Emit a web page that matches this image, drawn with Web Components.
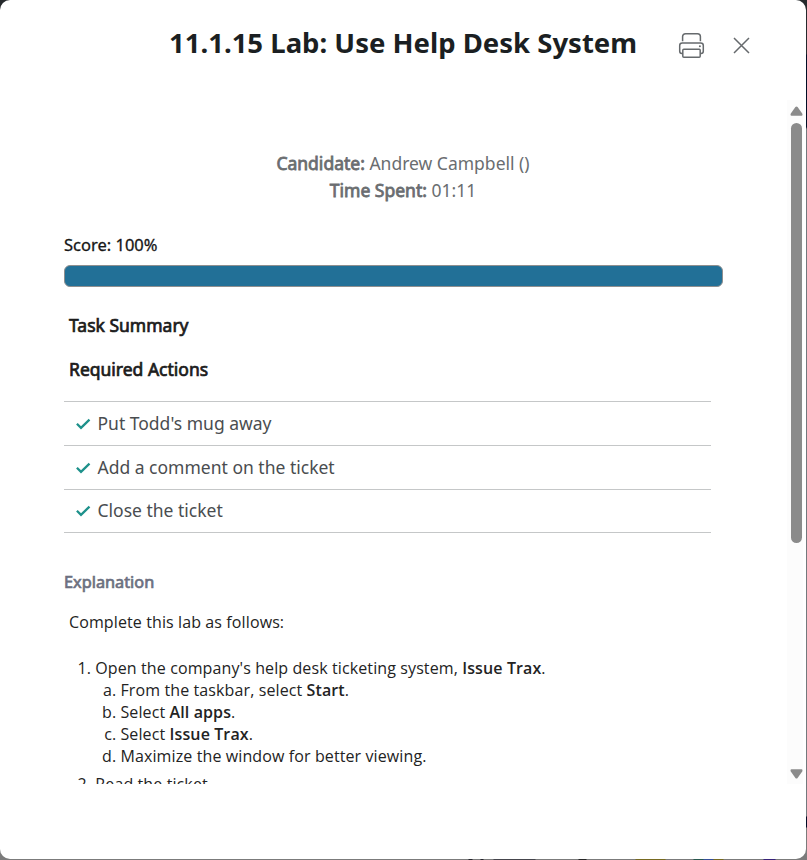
<!DOCTYPE html>
<html lang="en">
<head>
<meta charset="utf-8">
<title>11.1.15 Lab: Use Help Desk System</title>
<style>
html,body{margin:0;height:100%;overflow:hidden}
body{font-family:"Noto Sans","Open Sans",sans-serif;color:#1b1f22}
</style>
</head>
<body>
<report-dialog>
  <dialog-header slot="header">11.1.15 Lab: Use Help Desk System</dialog-header>
  <candidate-info>
    <info-line label="Candidate:">Andrew Campbell ()</info-line>
    <info-line label="Time Spent:">01:11</info-line>
  </candidate-info>
  <score-bar>Score: 100%</score-bar>
  <task-summary>
    <task-item>Put Todd's mug away</task-item>
    <task-item>Add a comment on the ticket</task-item>
    <task-item>Close the ticket</task-item>
  </task-summary>
  <lab-explanation></lab-explanation>
</report-dialog>
<script>
function define(name, html) {
  const t = document.createElement('template');
  t.innerHTML = html;
  customElements.define(name, class extends HTMLElement {
    constructor() {
      super();
      this.attachShadow({mode: 'open'}).append(t.content.cloneNode(true));
    }
    connectedCallback() {
      const l = this.shadowRoot.querySelector('[data-label]');
      if (l) l.textContent = this.getAttribute('label');
    }
  });
}

define('dialog-header', `
<style>
:host{display:flex;height:100px;box-sizing:border-box;padding:22px 56px 0 169px;align-items:flex-start}
h1{margin:0;font-size:27.5px;line-height:42px;font-weight:700;white-space:nowrap;width:509px;color:#1b1f22}
svg{display:block;flex:none;fill:none;stroke:#666a6d;stroke-width:1.5}
.print{margin:9px 0 0 0}
.close{margin:15px 0 0 27px}
</style>
<h1><slot></slot></h1>
<svg class="print" width="28" height="30" viewBox="0 0 28 30">
<path d="M4.6 10.3V5.6Q4.6 2.7 7.6 2.7H19.5Q22.4 2.7 22.4 5.6V10.3M4.8 22.4H3.8Q1.7 22.4 1.7 20.2V14.4Q1.7 11.9 4.2 11.9H22.7Q25.3 11.9 25.3 14.4V20.2Q25.3 22.4 23.1 22.4H22.3"/>
<rect x="4.8" y="18.3" width="17.4" height="8" rx="1"/><circle cx="21.9" cy="15.2" r="1" fill="#666a6d" stroke="none"/></svg>
<svg class="close" width="17" height="17" viewBox="0 0 17 17"><path d="M1 1L16 16M16 1L1 16"/></svg>`);

define('info-line', `
<style>:host{display:block;line-height:27px;font-size:17.5px;color:#6a6d70;white-space:nowrap}
b{font-weight:400;-webkit-text-stroke:.8px #6a6d70}</style>
<b data-label></b> <slot></slot>`);

define('candidate-info', `
<style>:host{display:flex;flex-direction:column;align-items:center;padding:50px 0 0 19px;height:54px}</style><slot></slot>`);

define('score-bar', `
<style>
:host{display:block;margin-top:28px;width:659px;font-size:16.5px;color:#161616}
.text{line-height:25px;-webkit-text-stroke:.3px #161616}
.bar{height:22px;box-sizing:border-box;border:1px solid #8f8f8f;border-radius:6px;background:#227097;margin-top:8px}
</style>
<div class="text"><slot></slot></div><div class="bar"></div>`);

define('task-item', `
<style>
:host{display:flex;align-items:center;height:43px;border-bottom:1px solid #c5c7c8;font-size:17.5px;line-height:25px;color:#4a4d50;padding-left:11.5px;gap:7px}
:host(:last-of-type){height:41px;padding-bottom:1px}
svg{flex:none;display:block}
</style>
<svg width="15" height="13" viewBox="0 0 15 13" fill="none" stroke="#1e918b" stroke-width="2.3"><path d="M.9 6.7L5 10.8L13.5 2.6"/></svg><slot></slot>`);

define('task-summary', `
<style>
:host{display:block;width:647px;padding-top:26px}
h2{margin:0;padding-left:5px;font-size:17.5px;line-height:24px;font-weight:400;-webkit-text-stroke:.7px #1b1b1b;color:#1b1b1b}
h2+h2{margin-top:20px}
.list{border-top:1px solid #c5c7c8;margin-top:20px}
</style>
<h2>Task Summary</h2><h2>Required Actions</h2><div class="list"><slot></slot></div>`);

define('lab-explanation', `
<style>
:host{display:block;padding-top:37px;font-size:16px;line-height:22px;color:#232323;white-space:nowrap}
h3{margin:0;font-size:16.3px;line-height:24px;font-weight:400;color:#6c7080;-webkit-text-stroke:.7px #6c7080}
.body{font-family:"Open Sans","Noto Sans",sans-serif;letter-spacing:.11px}
p{margin:17px 0 24px 5px}
ol{margin:0;padding-left:31.3px}
ol ol{list-style:lower-alpha;padding-left:25.2px;margin-bottom:6px}
b{font-weight:600}
</style>
<h3>Explanation</h3>
<div class="body"><p>Complete this lab as follows:</p>
<ol><li>Open the company's help desk ticketing system, <b>Issue Trax</b>.
<ol><li>From the taskbar, select <b>Start</b>.</li><li>Select <b>All apps</b>.</li><li>Select <b>Issue Trax</b>.</li><li>Maximize the window for better viewing.</li></ol></li>
<li>Read the ticket.</li></ol></div>`);

define('scroll-rail', `
<style>
:host{display:flex;flex-direction:column;width:16px;background:#fcfcfc;align-items:center;box-sizing:border-box;padding:6px 0 5px 3px;height:684px}
svg{display:block;flex:none}
.track{flex:1;padding-top:7px}
.thumb{width:11px;height:420px;border-radius:6px;background:#8b8b8b}
</style>
<svg width="13" height="10"><path d="M5.4 1Q6.5-.2 7.6 1L12.2 7.5Q13 9.7 11.5 9.7H1.5Q0 9.7 .8 7.5Z" fill="#8b8b8b"/></svg>
<div class="track"><div class="thumb"></div></div>
<svg width="13" height="10"><path d="M5.4 9Q6.5 10.2 7.6 9L12.2 2.5Q13 .3 11.5 .3H1.5Q0 .3 .8 2.5Z" fill="#8b8b8b"/></svg>`);

define('report-dialog', `
<style>
:host{display:block;height:860px;width:807px;box-sizing:border-box;padding-right:1px;
background:linear-gradient(#25292c 0 54px,#000d25 55px 127px,#73797d 129px 816px,#000a25 817px 827px,#7b7b7b 828px)}
.panel{height:859px;background:#fff;border-radius:10px}
.view{display:flex;height:684px;overflow:hidden}
.content{width:723px;padding-left:64px;flex:none;box-sizing:border-box;margin-right:64px}
.behind{display:block;height:1px;width:807px;background:linear-gradient(90deg,transparent 468px,#25252c 469px 472px,transparent 473px 480px,#25252c 481px 483px,transparent 484px 493px,#45454c 494px 535px,transparent 536px 578px,#252525 579px 586px,transparent 587px 635px,#776a20 636px 665px,transparent 666px 693px,#28584f 694px 703px,#354f9a 704px 713px,#776a20 714px 723px,transparent 724px 763px,#372279 764px 775px,transparent 776px)}
</style>
<div class="panel"><slot name="header"></slot><div class="view"><div class="content"><slot></slot></div><scroll-rail></scroll-rail></div></div><div class="behind"></div>`);
</script>
</body>
</html>
